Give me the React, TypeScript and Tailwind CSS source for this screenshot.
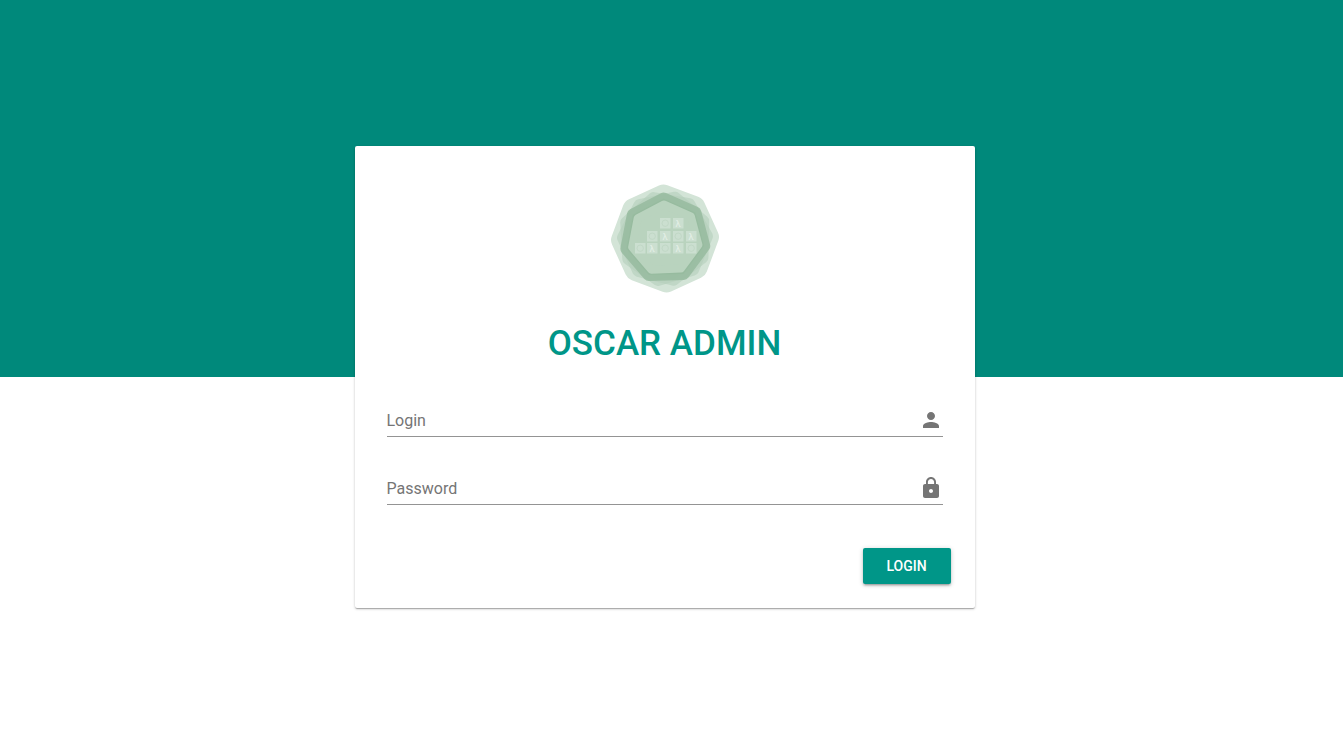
const PERSON = 'M12 12c2.21 0 4-1.79 4-4s-1.79-4-4-4-4 1.79-4 4 1.79 4 4 4zm0 2c-2.67 0-8 1.34-8 4v2h16v-2c0-2.66-5.33-4-8-4z';
const LOCK =
  'M18 8h-1V6c0-2.76-2.24-5-5-5S7 3.24 7 6v2H6c-1.1 0-2 .9-2 2v10c0 1.1.9 2 2 2h12c1.1 0 2-.9 2-2V10c0-1.1-.9-2-2-2zm-6 9c-1.1 0-2-.9-2-2s.9-2 2-2 2 .9 2 2-.9 2-2 2zm3.1-9H8.9V6c0-1.71 1.39-3.1 3.1-3.1 1.71 0 3.1 1.39 3.1 3.1v2z';

function polygon(sides: number, radius: number, rotation: number) {
  const points = [];
  for (let i = 0; i < sides; i++) {
    const angle = ((rotation + (i * 360) / sides - 90) * Math.PI) / 180;
    points.push(`${(54 + radius * Math.cos(angle)).toFixed(2)},${(54.5 + radius * Math.sin(angle)).toFixed(2)}`);
  }
  return points.join(' ');
}

// x offset, y offset, lambda or ring
const CELLS: [number, number, boolean][] = [
  [49, 34, false],
  [62, 34, true],
  [36, 47, false],
  [49, 47, true],
  [62, 47, false],
  [75, 47, true],
  [24, 59, false],
  [36, 59, true],
  [49, 59, false],
  [62, 59, true],
  [75, 59, false],
];

function Logo() {
  return (
    <svg width="108" height="109" viewBox="0 0 108 109" aria-label="Oscar logo">
      <polygon points={polygon(8, 43, -2)} fill="#d3e4d7" stroke="#d3e4d7" strokeWidth="22" strokeLinejoin="round" />
      <polygon points={polygon(7, 42, -16)} fill="#b4cfba" fillOpacity="0.6" stroke="#b4cfba" strokeOpacity="0.6" strokeWidth="12" strokeLinejoin="round" />
      <polygon points={polygon(7, 42, 14)} fill="#b4cfba" fillOpacity="0.6" stroke="#b4cfba" strokeOpacity="0.6" strokeWidth="12" strokeLinejoin="round" />
      <polygon points={polygon(7, 40, -2)} fill="#97bb9f" fillOpacity="0.85" stroke="#97bb9f" strokeOpacity="0.85" strokeWidth="12" strokeLinejoin="round" />
      <polygon points={polygon(7, 34, -2)} fill="#b9d3be" stroke="#b9d3be" strokeWidth="8" strokeLinejoin="round" />
      {CELLS.map(([x, y, lambda]) => (
        <g key={`${x}-${y}`}>
          <rect x={x} y={y} width="10.5" height="10.5" fill="#cbdfd0" />
          {lambda ? (
            <text x={x + 5.2} y={y + 8.6} textAnchor="middle" fontSize="9.5" fontFamily="Roboto, sans-serif" fill="#e4efe7">
              λ
            </text>
          ) : (
            <circle cx={x + 5.2} cy={y + 5.2} r="3.2" fill="none" stroke="#c1d8c6" strokeWidth="1" />
          )}
        </g>
      ))}
    </svg>
  );
}

function Field({ label, icon, className }: { label: string; icon: string; className?: string }) {
  return (
    <div className={`flex h-[34px] items-center justify-between border-b border-[#949494] ${className ?? ''}`}>
      <span className="pt-[2px] text-base text-[#757575]">{label}</span>
      <svg width="24" height="24" viewBox="0 0 24 24" fill="#757575">
        <path d={icon} />
      </svg>
    </div>
  );
}

export default function App() {
  return (
    <div className="relative h-screen overflow-hidden bg-white font-['Roboto',sans-serif]">
      <div className="h-[377px] bg-[#00897b]" />
      <div className="absolute inset-0 flex items-center justify-center pr-[14px] pb-[1px]">
        <div className="flex h-[462px] w-[620px] flex-col rounded-[2px] bg-white pt-[38px] shadow-[0_1px_3px_0_rgba(0,0,0,0.2),0_1px_1px_0_rgba(0,0,0,0.14),0_2px_1px_-1px_rgba(0,0,0,0.12)]">
          <div className="flex justify-center">
            <Logo />
          </div>
          <h1 className="mt-[30px] text-center text-[35px] leading-[42px] font-medium text-[#009688]">OSCAR ADMIN</h1>
          <div className="mt-[38px] px-8">
            <Field label="Login" icon={PERSON} />
            <Field label="Password" icon={LOCK} className="mt-[34px]" />
          </div>
          <div className="mt-[43px] flex justify-end pr-6">
            <button className="h-9 w-[88px] rounded-[2px] bg-[#009688] text-sm font-medium text-white uppercase shadow-[0_1px_5px_0_rgba(0,0,0,0.2),0_2px_2px_0_rgba(0,0,0,0.14),0_3px_1px_-2px_rgba(0,0,0,0.12)]">
              Login
            </button>
          </div>
        </div>
      </div>
    </div>
  );
}
